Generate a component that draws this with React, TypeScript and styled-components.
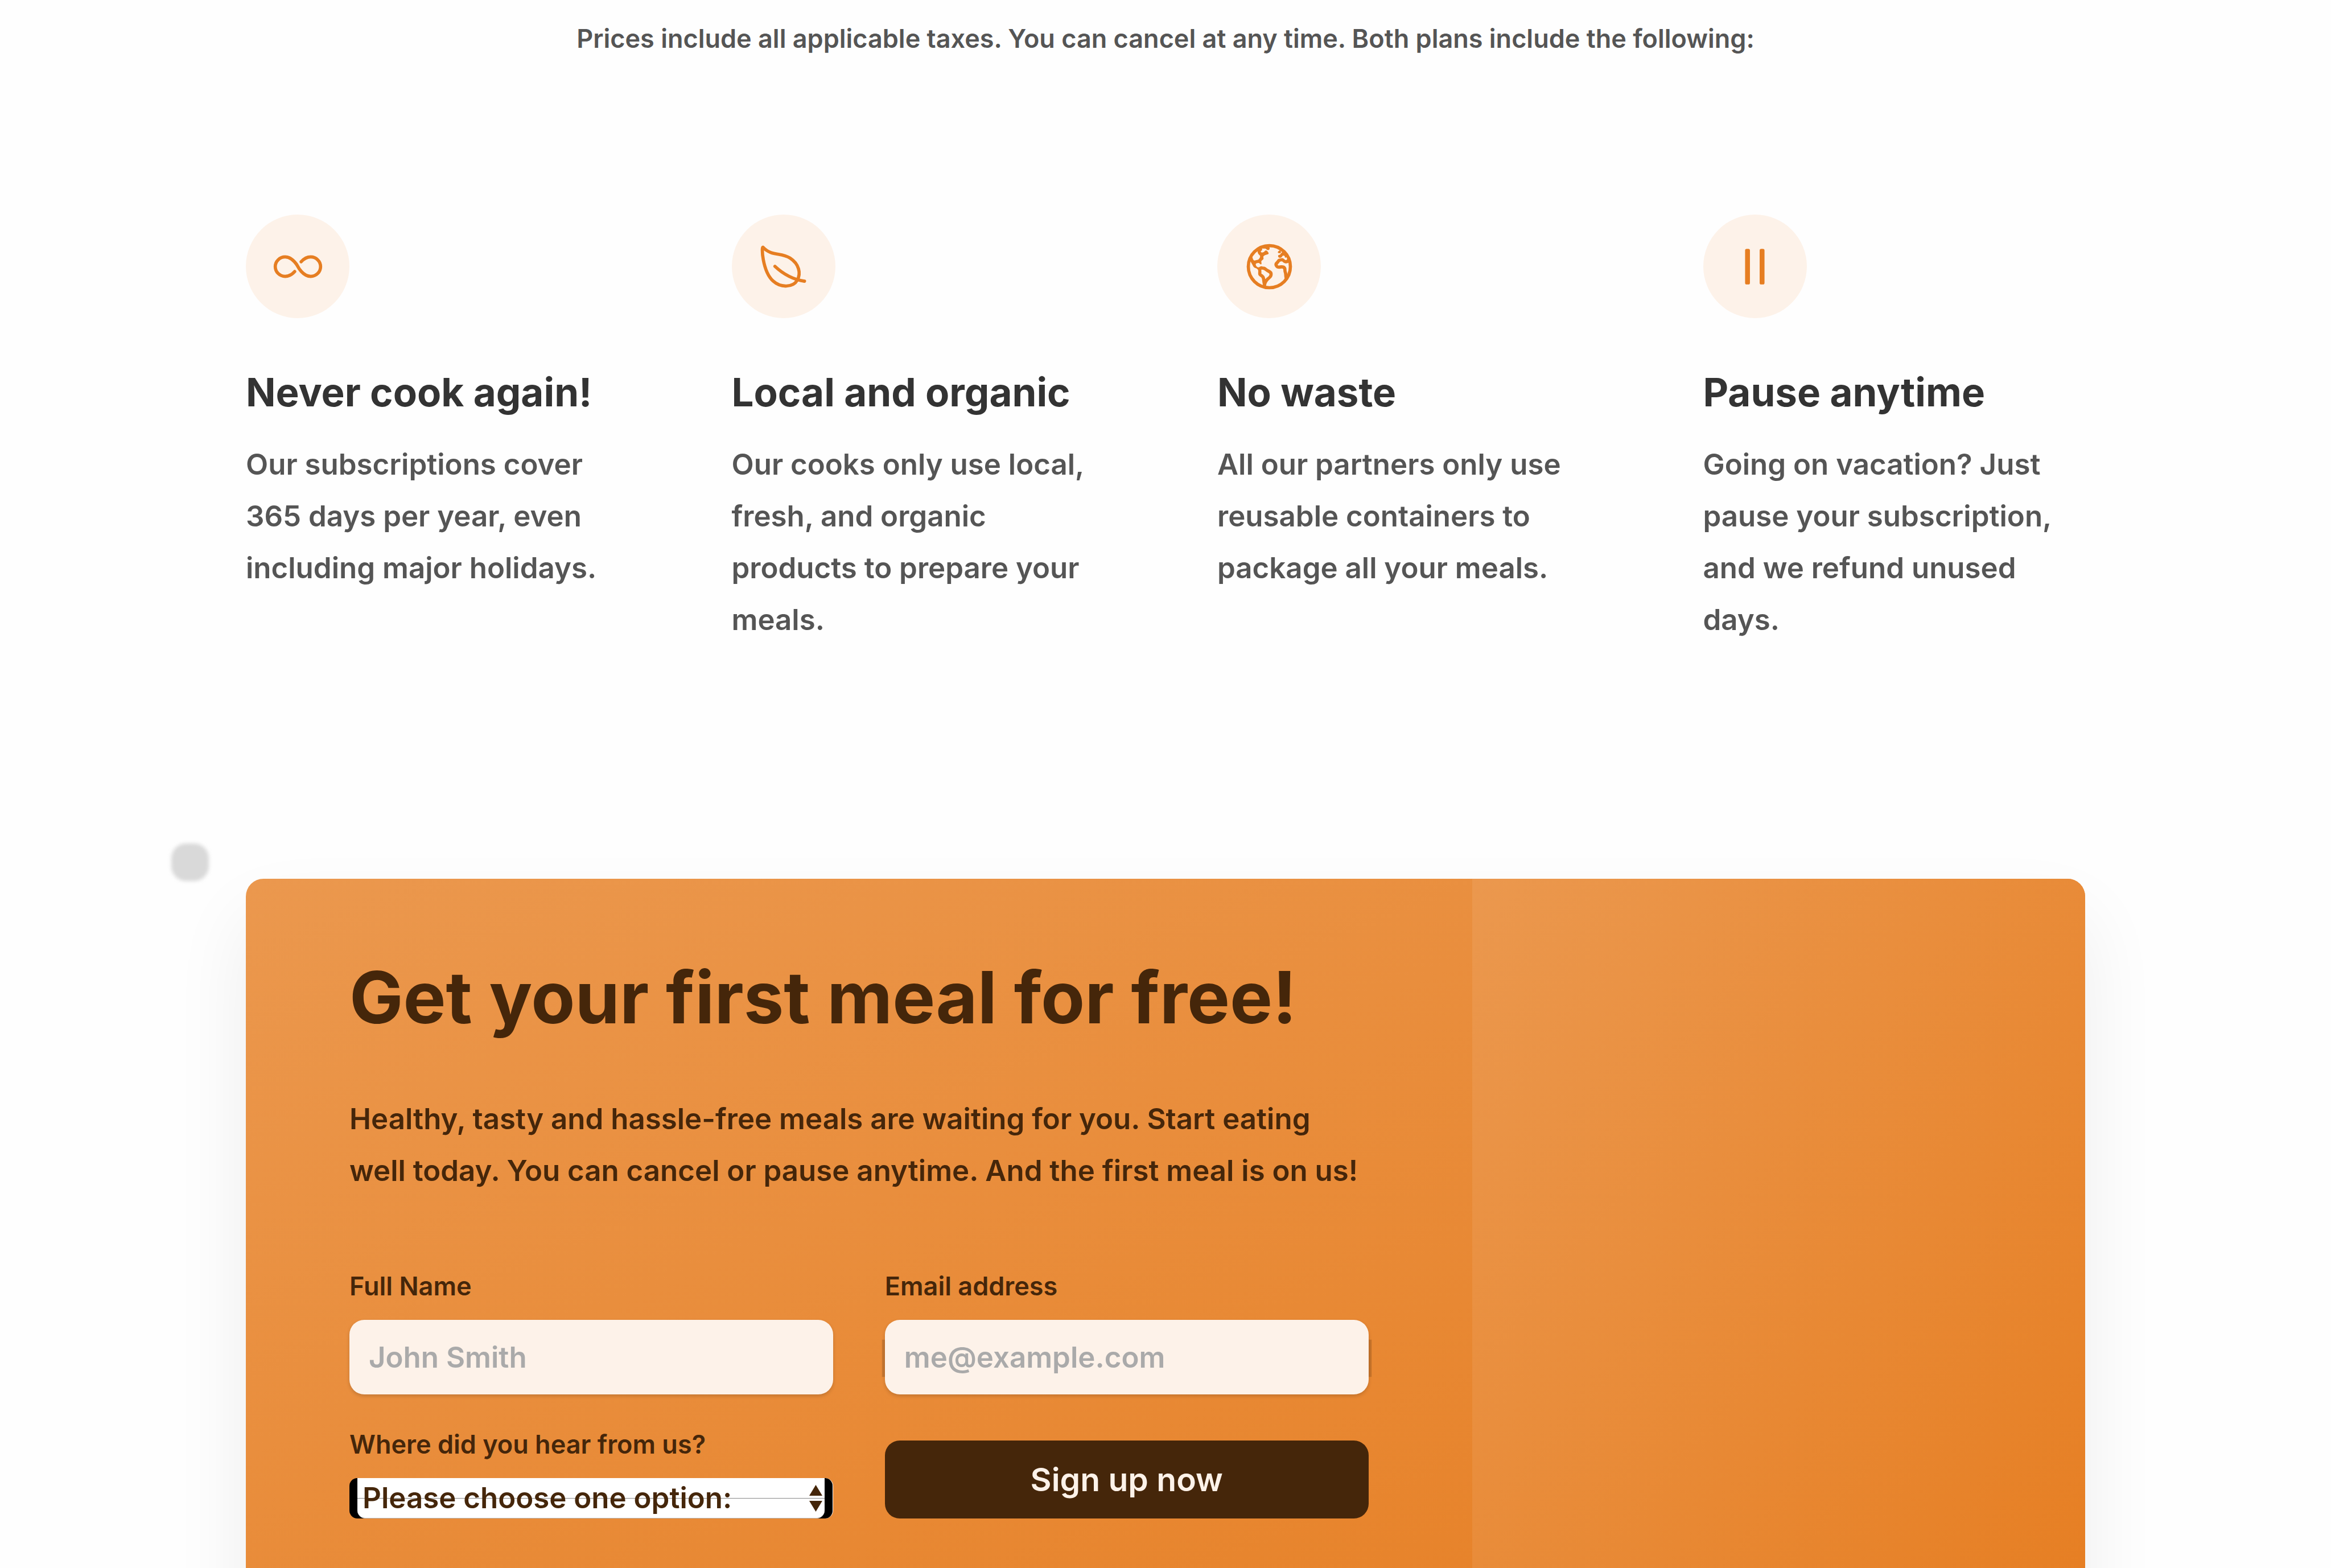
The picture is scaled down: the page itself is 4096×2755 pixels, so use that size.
import React from "react";
import styled, { createGlobalStyle } from "styled-components";
import {
  IoInfiniteOutline,
  IoLeafOutline,
  IoEarthOutline,
  IoPauseOutline,
} from "react-icons/io5";

const GlobalStyle = createGlobalStyle`
  *, *::before, *::after { box-sizing: border-box; margin: 0; padding: 0; }
  body {
    font-family: Inter, "Liberation Sans", sans-serif;
    font-weight: 600;
    color: #555;
    background: #fefefe;
  }
`;

const Page = styled.main`
  height: 100vh;
  overflow: hidden;
  padding-top: 31px;
`;

const Container = styled.div`
  width: 100%;
  max-width: 3414px;
  margin: 0 auto;
  padding: 0 91px;
`;

const PlanDetails = styled.p`
  font-size: 45px;
  line-height: 74px;
  text-align: center;
  margin-bottom: 272px;
`;

const FeatureGrid = styled.div`
  display: grid;
  grid-template-columns: repeat(4, 1fr);
  column-gap: 182px;
  margin-bottom: 410px;
`;

const Feature = styled.article``;

const IconCircle = styled.div`
  display: flex;
  align-items: center;
  justify-content: center;
  width: 182px;
  height: 182px;
  border-radius: 50%;
  background: #fdf2e9;
  color: #e67e22;
  font-size: 91px;
  margin-bottom: 89px;
`;

const FeatureTitle = styled.h3`
  font-size: 69px;
  line-height: 82px;
  font-weight: 700;
  color: #333;
  margin-bottom: 40px;
`;

const FeatureText = styled.p`
  font-size: 51px;
  line-height: 91px;
`;

const Cta = styled.section`
  position: relative;
  display: grid;
  grid-template-columns: 2fr 1fr;
  border-radius: 31px;
  background: linear-gradient(to right bottom, #eb984e, #e67e22);
  box-shadow: 0 68px 136px rgba(0, 0, 0, 0.07);
`;

const Blob = styled.span`
  position: absolute;
  left: -131px;
  top: -62px;
  width: 66px;
  height: 66px;
  border-radius: 26px;
  background: #d9d9d9;
  filter: blur(3px);
`;

const CtaBox = styled.div`
  padding: 138px 182px 182px;
  color: #45260a;
`;

const CtaPicture = styled.div`
  border-radius: 0 31px 31px 0;
  background: linear-gradient(to right bottom, #eb984e, #e67e22);
`;

const CtaTitle = styled.h2`
  font-size: 126px;
  line-height: 140px;
  font-weight: 700;
  white-space: nowrap;
  margin-bottom: 98px;
`;

const CtaText = styled.p`
  font-size: 51px;
  line-height: 91px;
  margin-bottom: 126px;
`;

const Form = styled.form`
  display: grid;
  grid-template-columns: 1fr 1fr;
  column-gap: 91px;
  row-gap: 56px;
`;

const Field = styled.div`
  display: flex;
  flex-direction: column;
`;

const Label = styled.label`
  font-size: 45px;
  line-height: 64px;
  margin-bottom: 27px;
`;

const Input = styled.input<{ $edge?: boolean }>`
  width: 100%;
  height: 131px;
  padding: 0 34px;
  border: none;
  border-radius: 26px;
  background: #fdf2e9;
  color: inherit;
  font: inherit;
  font-size: 51px;
  box-shadow: 0 3px 6px rgba(0, 0, 0, 0.16)
    ${({ $edge }) =>
      $edge
        ? ", -38px 2px 1px -33px rgba(0, 0, 0, 0.14), 38px 2px 1px -33px rgba(0, 0, 0, 0.14)"
        : ""};

  &::placeholder {
    color: #aaa;
    opacity: 1;
  }
`;

const SelectFrame = styled.div`
  padding: 0 14px;
  border-right: 1px solid #fff;
  border-radius: 14px;
  background: #000;
`;

const SelectFace = styled.div`
  position: relative;
  height: 71px;
  border-bottom: 1px solid #b4b4b4;
  border-radius: 0 0 14px 14px;
  background: #fff;
`;

const Select = styled.select`
  appearance: none;
  display: block;
  width: 100%;
  height: 70px;
  padding: 0 40px 0 9px;
  border: none;
  background: linear-gradient(#888, #888) center / 100% 1px no-repeat;
  color: #45260a;
  font: inherit;
  font-size: 51px;
  line-height: 70px;
`;

const SelectArrows = styled.svg`
  position: absolute;
  right: 4px;
  top: 12px;
  width: 23px;
  height: 47px;
  fill: #45260a;
  pointer-events: none;
`;

const Button = styled.button`
  align-self: end;
  height: 137px;
  border: none;
  border-radius: 26px;
  background: #45260a;
  color: #fdf2e9;
  font: inherit;
  font-size: 57px;
  cursor: pointer;
`;

const features = [
  {
    Icon: IoInfiniteOutline,
    title: "Never cook again!",
    text: "Our subscriptions cover 365 days per year, even including major holidays.",
  },
  {
    Icon: IoLeafOutline,
    title: "Local and organic",
    text: "Our cooks only use local, fresh, and organic products to prepare your meals.",
  },
  {
    Icon: IoEarthOutline,
    title: "No waste",
    text: "All our partners only use reusable containers to package all your meals.",
  },
  {
    Icon: IoPauseOutline,
    title: "Pause anytime",
    text: "Going on vacation? Just pause your subscription, and we refund unused days.",
  },
];

export default function App() {
  return (
    <>
      <GlobalStyle />
      <Page>
        <Container>
          <PlanDetails>
            Prices include all applicable taxes. You can cancel at any time.
            Both plans include the following:
          </PlanDetails>
          <FeatureGrid>
            {features.map(({ Icon, title, text }) => (
              <Feature key={title}>
                <IconCircle>
                  <Icon aria-hidden />
                </IconCircle>
                <FeatureTitle>{title}</FeatureTitle>
                <FeatureText>{text}</FeatureText>
              </Feature>
            ))}
          </FeatureGrid>
          <Cta>
            <Blob />
            <CtaBox>
              <CtaTitle>Get your first meal for free!</CtaTitle>
              <CtaText>
                Healthy, tasty and hassle-free meals are waiting for you. Start
                eating
                <br />
                well today. You can cancel or pause anytime. And the first meal
                is on us!
              </CtaText>
              <Form onSubmit={(e) => e.preventDefault()}>
                <Field>
                  <Label htmlFor="full-name">Full Name</Label>
                  <Input id="full-name" type="text" placeholder="John Smith" />
                </Field>
                <Field>
                  <Label htmlFor="email">Email address</Label>
                  <Input
                    id="email"
                    type="email"
                    placeholder="me@example.com"
                    $edge
                  />
                </Field>
                <Field>
                  <Label htmlFor="where">Where did you hear from us?</Label>
                  <SelectFrame>
                    <SelectFace>
                      <Select id="where" defaultValue="">
                        <option value="">Please choose one option:</option>
                        <option value="friends">Friends and family</option>
                        <option value="youtube">YouTube video</option>
                        <option value="podcast">Podcast</option>
                        <option value="ad">Facebook ad</option>
                        <option value="others">Others</option>
                      </Select>
                      <SelectArrows viewBox="0 0 23 47" aria-hidden>
                        <path d="M11.5 0 23 19H0zM11.5 47 23 28H0z" />
                      </SelectArrows>
                    </SelectFace>
                  </SelectFrame>
                </Field>
                <Button type="submit">Sign up now</Button>
              </Form>
            </CtaBox>
            <CtaPicture />
          </Cta>
        </Container>
      </Page>
    </>
  );
}
